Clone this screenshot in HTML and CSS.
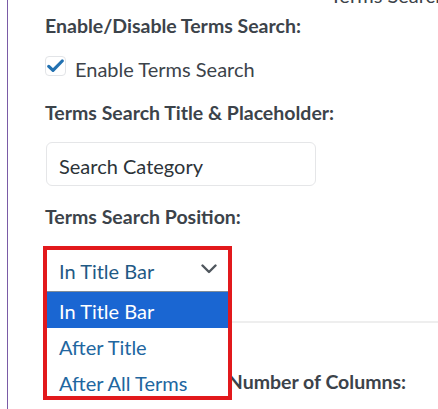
FILE: index.html
```html
<!DOCTYPE html>
<html lang="en">
<head>
<meta charset="utf-8">
<title>Terms Search Settings</title>
<link rel="stylesheet" href="styles.css">
</head>
<body>
<div class="panel">
  <div class="top-note">Terms Search</div>
  <div class="label label-first">Enable/Disable Terms Search:</div>
  <label class="check-row">
    <span class="checkbox">
      <svg width="17" height="14" viewBox="0 0 17 14"><path d="M1.8 7.4 L6 11.4 L15.2 2" fill="none" stroke="#2271b1" stroke-width="3.2" stroke-linecap="round" stroke-linejoin="round"/></svg>
    </span>
    <span class="check-text">Enable Terms Search</span>
  </label>
  <div class="label label-second">Terms Search Title &amp; Placeholder:</div>
  <div class="text-input">Search Category</div>
  <div class="label label-third">Terms Search Position:</div>
  <div class="select-wrap">
    <div class="select">
      <span class="select-value">In Title Bar</span>
      <svg class="chevron" width="16" height="10" viewBox="0 0 16 10"><path d="M1.5 1.5 L8 8 L14.5 1.5" fill="none" stroke="#50575e" stroke-width="2.4" stroke-linecap="round" stroke-linejoin="round"/></svg>
    </div>
    <ul class="dropdown">
      <li class="option selected">In Title Bar</li>
      <li class="option">After Title</li>
      <li class="option">After All Terms</li>
    </ul>
    <div class="highlight-box"></div>
  </div>
  <hr class="divider">
  <div class="label label-fourth">Terms Listing Layout Number of Columns:</div>
</div>
</body>
</html>
```
FILE: styles.css
```css
* { box-sizing: border-box; }
html, body { margin: 0; padding: 0; background: #ffffff; }
body {
  font-family: Lato, "Open Sans", "DejaVu Sans", sans-serif;
  color: #3c434a;
  width: 438px;
  height: 409px;
  overflow: hidden;
}
.panel {
  display: flow-root;
  margin-left: 7px;
  border-left: 1px solid #7a5ba6;
  height: 409px;
  padding-left: 37px;
  overflow: hidden;
}
.top-note {
  margin-left: 285px;
  margin-top: -15px;
  font-size: 20px;
  line-height: 20px;
  white-space: nowrap;
  color: #3c434a;
}
.label {
  font-size: 19.5px;
  font-weight: 700;
  line-height: 24px;
  color: #3c434a;
  white-space: nowrap;
}
.label-first { margin-top: 9px; }
.check-row {
  display: flex;
  align-items: flex-start;
  gap: 9px;
  margin-top: 18px;
}
.checkbox {
  width: 21px;
  height: 20px;
  border: 1px solid #e2e4e7;
  border-radius: 4px;
  display: flex;
  align-items: center;
  justify-content: center;
  background: #fff;
}
.check-text {
  font-size: 20px;
  line-height: 28px;
  margin-top: -1px;
}
.label-second { margin-top: 18px; }
.text-input {
  margin-top: 17px;
  margin-left: 1px;
  width: 270px;
  height: 44px;
  border: 1px solid #e5e6e8;
  border-radius: 6px;
  padding: 11px 0 0 12px;
  font-size: 20px;
  line-height: 24px;
  color: #2c3338;
}
.label-third { margin-top: 19px; }
.select-wrap {
  position: relative;
  margin-top: 21px;
  margin-left: 2px;
  width: 181px;
}
.select {
  height: 41px;
  display: flex;
  align-items: center;
  justify-content: space-between;
  padding: 0 12px 0 12px;
  background: #fff;
}
.select-value {
  font-size: 20px;
  line-height: 24px;
  color: #1f5a85;
}
.chevron { margin-top: -3px; margin-right: -1px; }
.dropdown {
  position: absolute;
  top: 41px;
  left: 0;
  width: 181px;
  margin: 0;
  padding: 0;
  list-style: none;
  background: #fff;
  border-top: 1px solid #7f8c99;
  z-index: 2;
}
.option {
  height: 36px;
  line-height: 36px;
  padding: 1px 0 0 12px;
  font-size: 20px;
  color: #2166a0;
  white-space: nowrap;
}
.option.selected {
  background: #1a66d2;
  color: #ffffff;
}
.highlight-box {
  position: absolute;
  top: -4px;
  left: -4px;
  width: 189px;
  height: 154px;
  border: 4px solid #e2191c;
  z-index: 3;
  pointer-events: none;
}
.divider {
  margin: 30px 0 0 0;
  border: 0;
  height: 2px;
  background: #eeeeee;
}
.label-fourth { margin-top: 47px; }
```
